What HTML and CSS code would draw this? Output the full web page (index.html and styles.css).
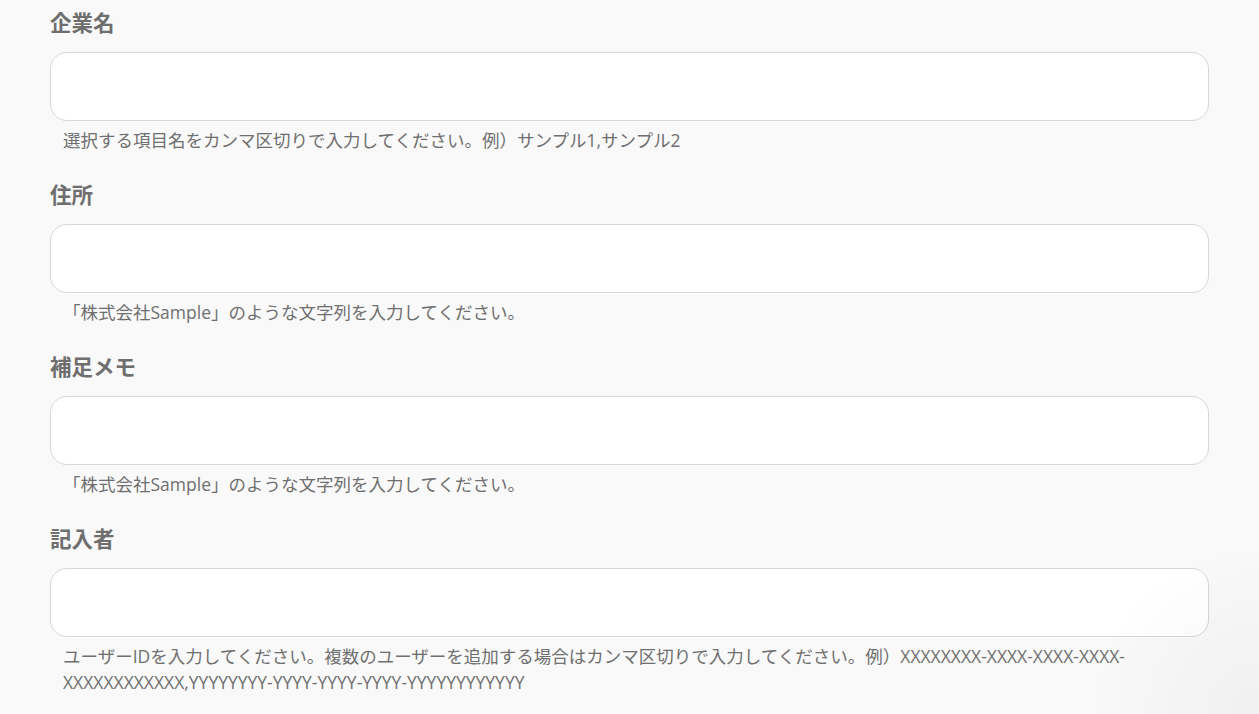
FILE: index.html
```html
<!DOCTYPE html>
<html lang="ja">
<head>
<meta charset="utf-8">
<link rel="stylesheet" href="styles.css">
</head>
<body>
<main class="form">
  <div class="field">
    <label class="label">企業名</label>
    <input class="input" type="text">
    <p class="help">選択する項目名をカンマ区切りで入力してください。例）サンプル1,サンプル2</p>
  </div>
  <div class="field">
    <label class="label">住所</label>
    <input class="input" type="text">
    <p class="help">「株式会社Sample」のような文字列を入力してください。</p>
  </div>
  <div class="field">
    <label class="label">補足メモ</label>
    <input class="input" type="text">
    <p class="help">「株式会社Sample」のような文字列を入力してください。</p>
  </div>
  <div class="field">
    <label class="label">記入者</label>
    <input class="input" type="text">
    <p class="help">ユーザーIDを入力してください。複数のユーザーを追加する場合はカンマ区切りで入力してください。例）XXXXXXXX-XXXX-XXXX-XXXX-XXXXXXXXXXXX,YYYYYYYY-YYYY-YYYY-YYYY-YYYYYYYYYYYY</p>
  </div>
</main>
<div class="corner-shade"></div>
</body>
</html>
```
FILE: styles.css
```css
html, body {
  margin: 0;
  padding: 0;
  background: #f9f9f9;
  font-family: "Open Sans", "Noto Sans CJK JP", sans-serif;
}
.form {
  display: flex;
  flex-direction: column;
  gap: 27px;
  padding: 8px 50px 0 50px;
}
.field {
  display: flex;
  flex-direction: column;
}
.label {
  font-family: "Noto Sans CJK JP", sans-serif;
  font-size: 21.5px;
  line-height: 28px;
  font-weight: 700;
  color: #6e6e6e;
  margin-bottom: 16px;
}
.input {
  box-sizing: border-box;
  height: 69px;
  width: 100%;
  border: 1px solid #d4d7de;
  border-radius: 17px;
  background: #fff;
  margin: 0;
  outline: none;
}
.help {
  margin: 6px 0 0 0;
  padding: 0 0 0 13px;
  font-size: 17.5px;
  line-height: 26px;
  color: #6f6f6f;
  word-break: normal;
}
.corner-shade {
  position: fixed;
  right: 0;
  bottom: 0;
  width: 160px;
  height: 160px;
  pointer-events: none;
  background: radial-gradient(circle at 100% 100%, rgba(0,0,0,0.035) 0, rgba(0,0,0,0.015) 45%, rgba(0,0,0,0) 75%);
}
```
